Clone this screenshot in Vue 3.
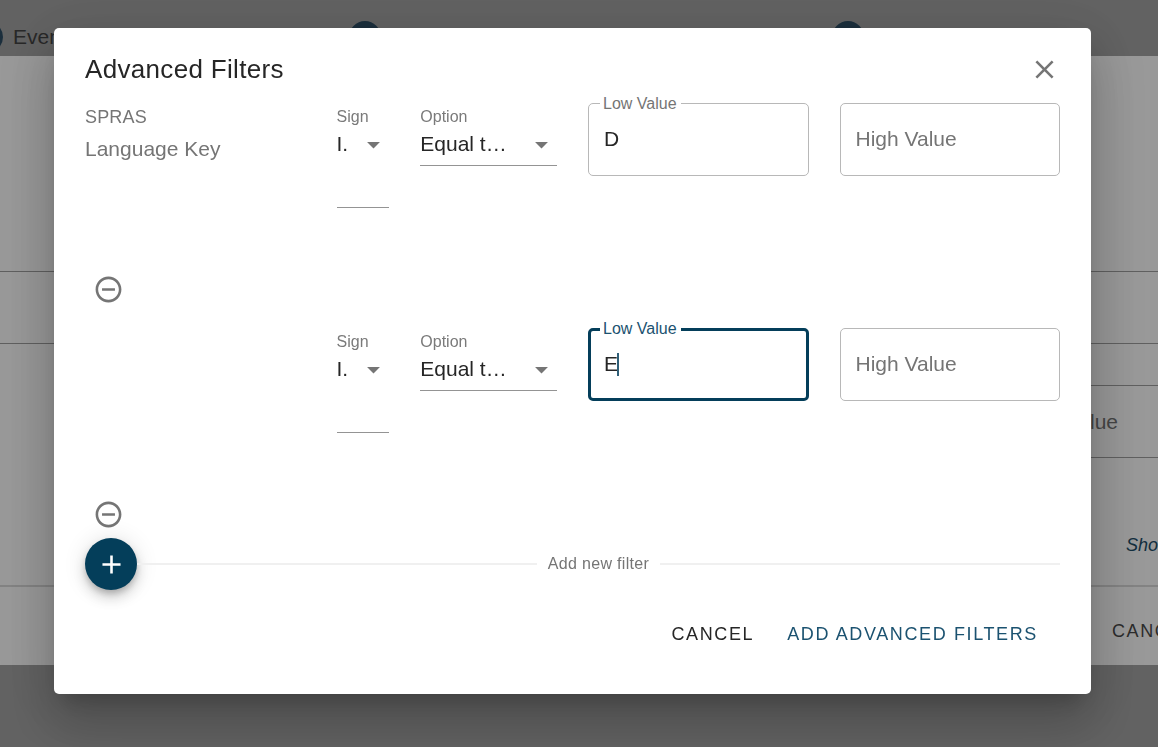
<script setup>
import { ref } from 'vue'

const rows = ref([
  { id: 1, name: 'SPRAS', description: 'Language Key', low: 'D', high: '', focused: false },
  { id: 2, name: '', description: '', low: 'E', high: '', focused: true },
])
const steps = ['Event', '', '']
</script>

<template>
  <div class="page">
    <div class="stepper">
      <div v-for="(step, i) in steps" :key="i" class="step">
        <span class="step-dot"></span>
        <span>{{ step }}</span>
      </div>
    </div>
    <main class="card">
      <input class="bg-field bg-wide" type="text" aria-label="Event field" />
      <div class="bg-half">
        <label class="bg-field bg-value">High Value</label>
      </div>
      <div class="bg-link"><a href="#">Show</a></div>
      <div class="bg-actions"><button type="button">CANCEL</button></div>
    </main>

    <div class="backdrop">
      <section class="dialog" role="dialog" aria-modal="true" aria-labelledby="dialog-title">
        <header class="dialog-header">
          <h2 id="dialog-title">Advanced Filters</h2>
          <button class="icon-button" type="button" aria-label="Close">
            <svg viewBox="0 0 24 24" aria-hidden="true">
              <path d="M19 6.41 17.59 5 12 10.59 6.41 5 5 6.41 10.59 12 5 17.59 6.41 19 12 13.41 17.59 19 19 17.59 13.41 12z" />
            </svg>
          </button>
        </header>

        <div v-for="row in rows" :key="row.id" class="filter">
          <div class="filter-grid">
            <div class="filter-name">
              <div class="code">{{ row.name }}</div>
              <div class="description">{{ row.description }}</div>
            </div>
            <div class="select-field sign">
              <label :for="'sign-' + row.id">Sign</label>
              <div class="select-box">
                <select :id="'sign-' + row.id">
                  <option>I.</option>
                </select>
                <svg viewBox="0 0 24 24" aria-hidden="true"><path d="M7 10l5 5 5-5z" /></svg>
              </div>
            </div>
            <div class="select-field option">
              <label :for="'option-' + row.id">Option</label>
              <div class="select-box">
                <select :id="'option-' + row.id">
                  <option>Equal t…</option>
                </select>
                <svg viewBox="0 0 24 24" aria-hidden="true"><path d="M7 10l5 5 5-5z" /></svg>
              </div>
            </div>
            <div class="text-field" :class="{ focused: row.focused }">
              <input :id="'low-' + row.id" v-model="row.low" type="text" />
              <label class="floating" :for="'low-' + row.id">Low Value</label>
              <span v-if="row.focused" class="caret"></span>
            </div>
            <div class="text-field">
              <input :id="'high-' + row.id" v-model="row.high" type="text" />
              <label v-if="!row.high" class="resting" :for="'high-' + row.id">High Value</label>
            </div>
          </div>
          <button class="icon-button remove" type="button" aria-label="Remove filter">
            <svg viewBox="0 0 24 24" aria-hidden="true">
              <path d="M7 11v2h10v-2H7zm5-9C6.48 2 2 6.48 2 12s4.48 10 10 10 10-4.48 10-10S17.52 2 12 2zm0 18c-4.41 0-8-3.59-8-8s3.59-8 8-8 8 3.59 8 8-3.59 8-8 8z" />
            </svg>
          </button>
        </div>

        <div class="add-row">
          <button class="fab" type="button" aria-label="Add new filter">
            <svg viewBox="0 0 24 24" aria-hidden="true"><path d="M19 13h-6v6h-2v-6H5v-2h6V5h2v6h6v2z" /></svg>
          </button>
          <span class="line"></span>
          <span class="add-text">Add new filter</span>
          <span class="line"></span>
        </div>

        <footer class="dialog-actions">
          <button type="button">CANCEL</button>
          <button class="primary" type="button">ADD ADVANCED FILTERS</button>
        </footer>
      </section>
    </div>
  </div>
</template>

<style>
body {
  margin: 0;
}
</style>

<style scoped>
.page,
.page * {
  box-sizing: border-box;
}
.page {
  min-height: 100vh;
  overflow: hidden;
  background: #a4a4a4;
  color: #262626;
  font-family: "Liberation Sans", Arial, sans-serif;
  font-size: 21px;
}
button,
input,
select {
  margin: 0;
  padding: 0;
  border: 0;
  outline: 0;
  background: none;
  color: inherit;
  font: inherit;
  letter-spacing: inherit;
}
button {
  cursor: pointer;
}
svg {
  display: block;
  width: 31px;
  height: 31px;
  fill: currentColor;
}

/* Page behind the dialog */
.stepper {
  display: grid;
  grid-template-columns: 378fr 483fr 326fr;
  margin-left: -29px;
  padding-top: 21px;
  height: 56px;
}
.step {
  display: flex;
  align-items: center;
  gap: 10px;
  height: 32px;
  color: #434343;
}
.step-dot {
  width: 32px;
  height: 32px;
  border-radius: 50%;
  background: #2d4e65;
}
.card {
  display: flex;
  flex-direction: column;
  padding-top: 215px;
  background: #fff;
}
.bg-field {
  height: 73px;
  border: 1px solid #a0a0a0;
}
.bg-wide {
  margin: 0 -10px;
}
.bg-half {
  margin: 41px -10px 0 50%;
}
.bg-value {
  display: flex;
  align-items: center;
  justify-content: flex-end;
  padding-right: 49px;
  color: #757575;
}
.bg-link {
  display: flex;
  justify-content: flex-end;
  margin-top: 69px;
  padding-bottom: 22px;
  border-bottom: 2px solid #dadada;
  font-size: 18px;
  font-style: italic;
  line-height: 36px;
}
.bg-link a {
  width: 32px;
  color: #1d4e69;
  text-decoration: none;
}
.bg-actions {
  display: flex;
  justify-content: flex-end;
  padding: 22px 0 11px;
}
.bg-actions button {
  width: 46px;
  height: 45px;
  color: #4a4a4a;
  font-size: 18px;
  letter-spacing: 0.09em;
  text-align: left;
}

/* Dialog */
.backdrop {
  position: fixed;
  inset: 0;
  display: flex;
  align-items: flex-start;
  padding: 28px 67px 53px 54px;
  background: rgba(0, 0, 0, 0.4);
}
.dialog {
  flex: 1;
  padding: 23px 31px 37px;
  border-radius: 5px;
  background: #fff;
  box-shadow:
    0 14px 20px -9px rgba(0, 0, 0, 0.2),
    0 31px 49px 4px rgba(0, 0, 0, 0.14),
    0 12px 60px 10px rgba(0, 0, 0, 0.12);
}
.dialog-header {
  display: flex;
  align-items: center;
  justify-content: space-between;
  height: 36px;
}
h2 {
  margin: 0;
  font-size: 26px;
  font-weight: 400;
  letter-spacing: 0.0125em;
  line-height: 36px;
}
.icon-button {
  display: flex;
  align-items: center;
  justify-content: center;
  color: #757575;
}
.filter {
  padding-top: 16px;
}
.filter-grid {
  display: grid;
  grid-template-columns: repeat(12, 1fr);
  gap: 31px;
  align-items: start;
  min-height: 163px;
}
.filter-name {
  grid-column: span 3;
  color: #757575;
}
.code {
  font-size: 18px;
  letter-spacing: 0.01em;
  line-height: 28px;
}
.description {
  line-height: 36px;
}
.select-field {
  padding-top: 4px;
}
.select-field.sign {
  grid-column: span 1;
}
.select-field.option {
  grid-column: span 2;
}
.select-field label {
  display: block;
  color: #7a7a7a;
  font-size: 16px;
  line-height: 20px;
}
.select-box {
  position: relative;
  height: 39px;
  border-bottom: 1px solid #949494;
}
.sign .select-box {
  height: 81px;
}
.select-box select {
  display: block;
  width: 100%;
  height: 32px;
  appearance: none;
}
.select-box svg {
  position: absolute;
  top: 2px;
  right: 0;
  color: #757575;
  pointer-events: none;
}
.text-field {
  position: relative;
  grid-column: span 3;
}
.text-field input {
  display: block;
  width: 100%;
  height: 73px;
  padding: 0 15px 2px;
  border: 1px solid #b8b8b8;
  border-radius: 5px;
}
.text-field label {
  position: absolute;
  color: #757575;
}
.text-field .floating {
  top: -9px;
  left: 12px;
  padding: 0 4px 0 3px;
  background: #fff;
  font-size: 16px;
  line-height: 20px;
}
.text-field .resting {
  top: 18px;
  left: 16px;
  line-height: 36px;
  cursor: text;
}
.text-field.focused input {
  padding: 0 13px 2px;
  border: 3px solid #043e5a;
}
.text-field.focused .floating {
  color: #1b5270;
}
.caret {
  position: absolute;
  top: 25px;
  left: 29px;
  width: 2px;
  height: 23px;
  background: #2f5f78;
}
.remove {
  width: 46px;
  height: 46px;
}
.add-row {
  display: flex;
  align-items: center;
  margin-top: 1px;
}
.fab {
  display: flex;
  align-items: center;
  justify-content: center;
  width: 52px;
  height: 52px;
  border-radius: 50%;
  background: #043e5a;
  color: #fff;
  box-shadow:
    0 4px 6px -1px rgba(0, 0, 0, 0.2),
    0 8px 13px 0 rgba(0, 0, 0, 0.14),
    0 1px 23px 0 rgba(0, 0, 0, 0.12);
}
.line {
  flex: 1;
  height: 2px;
  background: #f0f0f0;
}
.add-text {
  padding: 0 11px;
  color: #757575;
  font-size: 16px;
  letter-spacing: 0.02em;
}
.dialog-actions {
  display: flex;
  justify-content: flex-end;
  gap: 13px;
  padding: 21px 12px 0 0;
}
.dialog-actions button {
  height: 46px;
  padding: 0 10px;
  font-size: 18px;
  letter-spacing: 0.09em;
}
.dialog-actions .primary {
  color: #1b5270;
}
</style>
